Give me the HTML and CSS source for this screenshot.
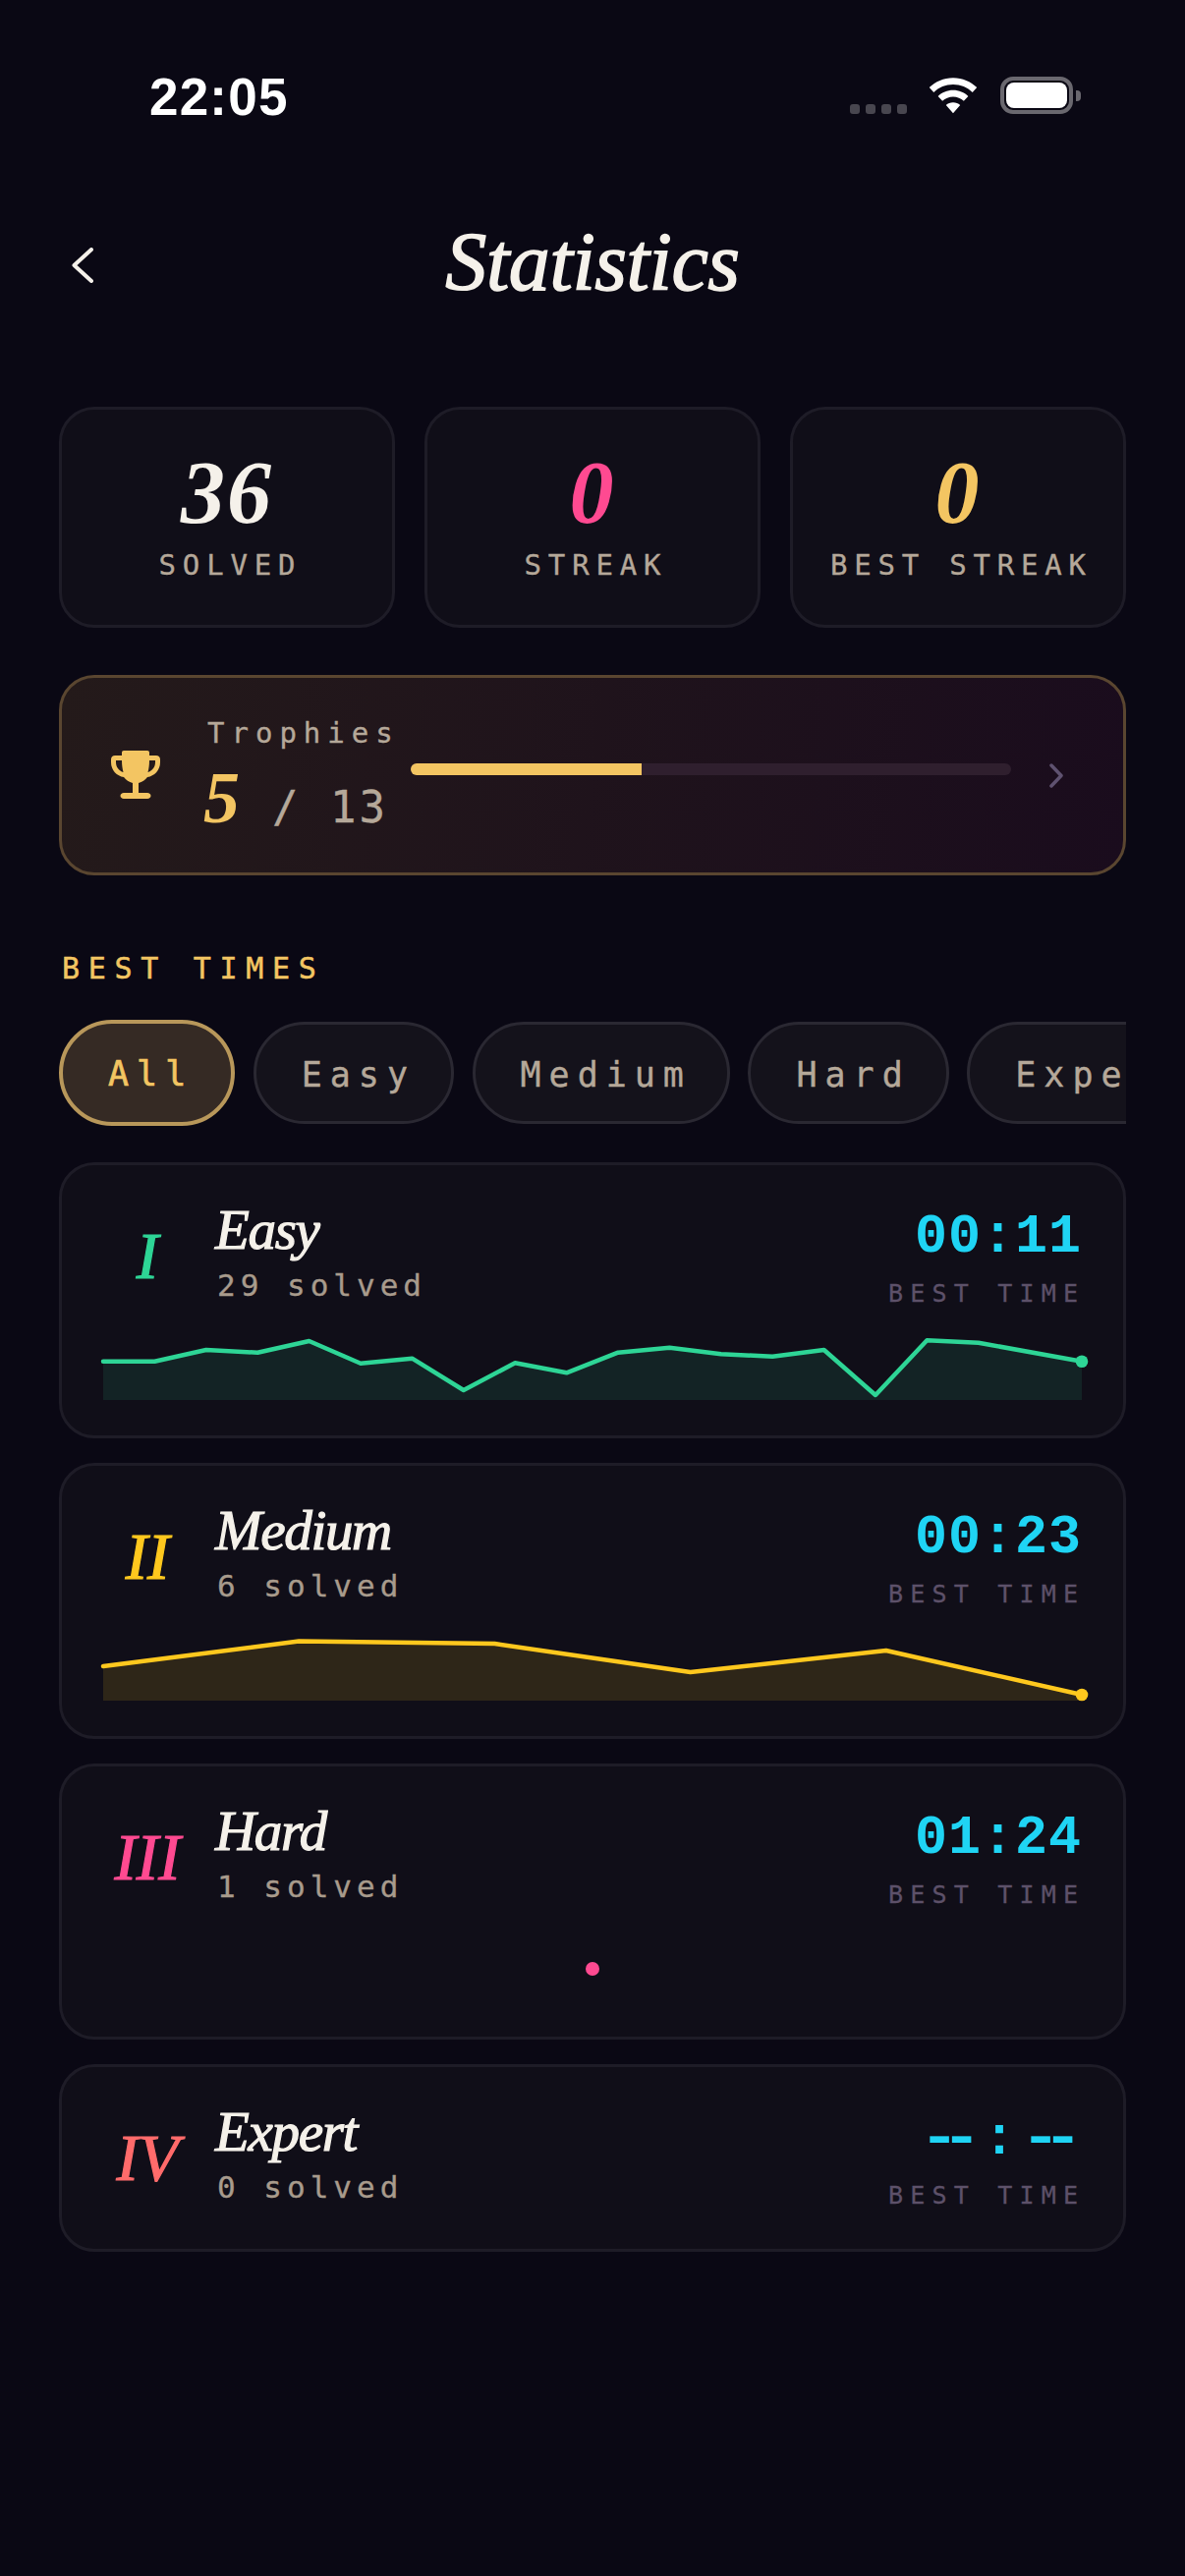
FILE: index.html
```html
<!DOCTYPE html>
<html lang="en">
<head>
<meta charset="utf-8">
<title>Statistics</title>
<link rel="stylesheet" href="styles.css">
</head>
<body>
<div class="screen">
  <div class="status">
    <span class="clock">22:05</span>
    <div class="status-icons">
      <div class="signal"><i></i><i></i><i></i><i></i></div>
      <svg class="wifi" width="50" height="37" viewBox="0 0 52 38"><path fill="#fff" d="M26 0C16 0 7.300 3.900.8 10.200l4.700 5.100C10.900 10.100 18 7 26 7s15.100 3.100 20.500 8.300l4.700-5.100C44.700 3.900 36 0 26 0zM26 13c-6.200 0-11.800 2.400-16 6.400l4.700 5.100c3-2.800 7-4.500 11.300-4.500s8.300 1.700 11.300 4.500l4.700-5.100C37.800 15.400 32.200 13 26 13zM26 26c-2.900 0-5.500 1.100-7.500 2.900L26 37.500l7.500-8.600C31.500 27.100 28.900 26 26 26z"/></svg>
      <div class="battery"><div class="battery-level"></div></div>
    </div>
  </div>

  <header class="nav">
    <svg class="back" width="22" height="36" viewBox="0 0 22 36"><path d="M20 2 2.500 18 20 34" fill="none" stroke="#f5f1ea" stroke-width="4" stroke-linecap="round" stroke-linejoin="round"/></svg>
    <h1 class="title">Statistics</h1>
  </header>

  <section class="stats">
    <div class="stat"><div class="stat-num">36</div><div class="stat-label">SOLVED</div></div>
    <div class="stat"><div class="stat-num pink">0</div><div class="stat-label">STREAK</div></div>
    <div class="stat"><div class="stat-num gold">0</div><div class="stat-label">BEST STREAK</div></div>
  </section>

  <section class="trophies">
    <svg class="trophy" width="50" height="50" viewBox="0 0 50 50"><path fill="#f3c562" d="M13 0h24c1.200 0 2 .8 2 2v3h7c2.200 0 4 1.500 4 4v3c0 8-6 14-13 15-2.200 3-5.200 5-9 6v10h9c2 0 3.500 1.400 3.500 3s-1.500 3-3.500 3H13c-2 0-3.500-1.400-3.500-3s1.500-3 3.500-3h9v-10c-3.800-1-6.800-3-9-6C6 26 0 20 0 12V9c0-2.500 1.800-4 4-4h7V2c0-1.200.8-2 2-2zM5 10v2c0 4.800 3.200 8.700 7.500 10-1-3.600-1.500-7.700-1.500-12H5zm34 0c0 4.300-.5 8.400-1.500 12 4.300-1.300 7.500-5.200 7.500-10v-2h-6z"/></svg>
    <div class="trophy-body">
      <div class="trophy-label">Trophies</div>
      <div class="trophy-row">
        <div class="trophy-count"><span class="trophy-num">5</span><span class="trophy-total">/ 13</span></div>
        <div class="track"><div class="fill"></div></div>
      </div>
    </div>
    <svg class="chev" width="14" height="25" viewBox="0 0 14 25"><path d="M2 2l10 10.500L2 23" fill="none" stroke="#5f5270" stroke-width="3.500" stroke-linecap="round" stroke-linejoin="round"/></svg>
  </section>

  <h2 class="section-title">BEST TIMES</h2>

  <nav class="pills">
    <span class="pill active">All</span>
    <span class="pill">Easy</span>
    <span class="pill">Medium</span>
    <span class="pill">Hard</span>
    <span class="pill">Expert</span>
  </nav>

  <section class="cards">
    <article class="card">
      <div class="card-top">
        <div class="numeral green">I</div>
        <div class="card-info"><div class="card-name">Easy</div><div class="card-solved">29 solved</div></div>
        <div class="card-time"><div class="time">00:11</div><div class="time-label">BEST TIME</div></div>
      </div>
      <svg class="spark" width="996" height="70" viewBox="0 0 996 70">
        <path fill="#2ed596" fill-opacity=".11" d="M0 30.700 52.400 30.700 104.800 19 157.200 21.700 209.600 10 262 32.700 314.400 27.700 366.800 60 419.200 32.300 471.600 42.300 524 21.700 576.400 16.700 628.800 23.300 681.200 25.700 733.600 19 786 65 838.400 9.300 890.800 11.700 996 30.700V70H0z"/>
        <path fill="none" stroke="#2ed596" stroke-width="4.500" stroke-linecap="round" stroke-linejoin="round" d="M0 30.700 52.400 30.700 104.800 19 157.200 21.700 209.600 10 262 32.700 314.400 27.700 366.800 60 419.200 32.300 471.600 42.300 524 21.700 576.400 16.700 628.800 23.300 681.200 25.700 733.600 19 786 65 838.400 9.300 890.800 11.700 996 30.700"/>
        <circle cx="996" cy="30.700" r="6.300" fill="#2ed596"/>
      </svg>
    </article>

    <article class="card">
      <div class="card-top">
        <div class="numeral yellow">II</div>
        <div class="card-info"><div class="card-name">Medium</div><div class="card-solved">6 solved</div></div>
        <div class="card-time"><div class="time">00:23</div><div class="time-label">BEST TIME</div></div>
      </div>
      <svg class="spark" width="996" height="70" viewBox="0 0 996 70">
        <path fill="#ffc81e" fill-opacity=".13" d="M0 35 199.200 9.600 398.400 12 597.600 41 796.800 19 996 64V70H0z"/>
        <path fill="none" stroke="#ffc81e" stroke-width="4.500" stroke-linecap="round" stroke-linejoin="round" d="M0 35 199.200 9.600 398.400 12 597.600 41 796.800 19 996 64"/>
        <circle cx="996" cy="64" r="6.300" fill="#ffc81e"/>
      </svg>
    </article>

    <article class="card">
      <div class="card-top">
        <div class="numeral pink">III</div>
        <div class="card-info"><div class="card-name">Hard</div><div class="card-solved">1 solved</div></div>
        <div class="card-time"><div class="time">01:24</div><div class="time-label">BEST TIME</div></div>
      </div>
      <svg class="spark" width="996" height="70" viewBox="0 0 996 70">
        <circle cx="498" cy="37" r="7" fill="#ff4a91"/>
      </svg>
    </article>

    <article class="card short">
      <div class="card-top">
        <div class="numeral coral">IV</div>
        <div class="card-info"><div class="card-name">Expert</div><div class="card-solved">0 solved</div></div>
        <div class="card-time"><div class="time"><span class="dash">--</span>:<span class="dash">--</span></div><div class="time-label">BEST TIME</div></div>
      </div>
    </article>
  </section>
</div>
</body>
</html>
```

FILE: styles.css
```css
* { box-sizing: border-box; margin: 0; padding: 0; }
html, body { background: #0a0814; }
body { width: 1206px; height: 2622px; overflow: hidden; }
.screen { width: 1206px; height: 2622px; display: flex; flex-direction: column; padding: 0 60px; }

.status { height: 100px; margin: 0 -60px; padding: 72px 114px 0 152px; display: flex; justify-content: space-between; align-items: flex-start; }
.clock { font: 700 53px/53px "Liberation Sans", sans-serif; color: #fff; letter-spacing: 1.200px; }
.status-icons { display: flex; align-items: flex-end; height: 38px; margin-top: 6px; }
.signal { display: flex; gap: 6px; margin-right: 22px; }
.signal i { width: 10px; height: 10px; border-radius: 3px; background: #48464f; display: block; }
.wifi { margin-right: 23px; display: block; }
.battery { position: relative; width: 74px; height: 38px; border: 4px solid #6a686f; border-radius: 13px; padding: 2px; }
.battery::after { content: ""; position: absolute; right: -12px; top: 10px; width: 5px; height: 11px; background: #6a686f; border-radius: 0 4px 4px 0; }
.battery-level { width: 100%; height: 100%; background: #fff; border-radius: 8px; }

.nav { height: 100px; margin-top: 117px; display: grid; grid-template-columns: 1fr auto 1fr; align-items: center; }
.back { margin: 6px 0 0 13px; }
.title { font: italic 400 84px/100px "Liberation Serif", serif; color: #f5f1ea; -webkit-text-stroke: 1.500px #f5f1ea; letter-spacing: -.400px; }

.stats { display: grid; grid-template-columns: repeat(3, 1fr); gap: 30px; margin-top: 97px; }
.stat { height: 225px; background: #100e18; border: 3px solid #1e1c27; border-radius: 36px; display: flex; flex-direction: column; align-items: center; padding-top: 35px; }
.stat-num { font: italic 700 90px/100px "Liberation Serif", serif; color: #f5f1ea; letter-spacing: 2px; }
.stat-label { font: 400 29px/40px "DejaVu Sans Mono", monospace; -webkit-text-stroke: .35px currentColor; color: #b5a899; letter-spacing: 6.800px; margin-top: 3px; margin-right: -6.800px; white-space: nowrap; }
.stat-num.pink, .numeral.pink { color: #ff4a91; }
.stat-num.gold { color: #f3c562; }

.trophies { height: 204px; margin-top: 48px; border: 3px solid #5a4630; border-radius: 36px; background: linear-gradient(100deg, #241a1a, #1a0c1d); display: flex; align-items: center; padding: 0 61px 0 50px; }
.trophy { flex: none; }
.trophy-body { flex: 1; margin-left: 47px; }
.trophy-label { font: 400 29px/36px "DejaVu Sans Mono", monospace; -webkit-text-stroke: .35px currentColor; color: #b5a899; letter-spacing: 7px; margin-left: 1px; }
.trophy-row { display: flex; align-items: flex-start; margin-top: 10px; }
.trophy-count { display: flex; align-items: baseline; width: 208px; flex: none; margin-left: -3px; margin-right: 3px; }
.trophy-num { font: italic 700 74px/76px "Liberation Serif", serif; color: #f3c562; }
.trophy-total { font: 400 44px/1 "DejaVu Sans Mono", monospace; -webkit-text-stroke: .35px currentColor; color: #b5a899; margin-left: 33px; letter-spacing: 3px; white-space: pre; }
.track { flex: 1; height: 12px; border-radius: 6px; background: #2f1f2e; margin-top: 3px; overflow: hidden; }
.fill { width: 38.500%; height: 100%; background: #f3c562; }
.chev { flex: none; margin-left: 39px; }

.section-title { font: 400 30px/40px "DejaVu Sans Mono", monospace; -webkit-text-stroke: .5px currentColor; color: #f3c562; letter-spacing: 8.700px; margin: 75px 0 0 3px; }

.pills { display: flex; align-items: center; gap: 18.500px; height: 108px; margin-top: 32px; overflow: hidden; }
.pill { flex: none; height: 104px; padding: 0 36px 0 46px; border-radius: 52px; border: 3px solid #2a2832; background: #14121b; font: 400 35px/102px "DejaVu Sans Mono", monospace; -webkit-text-stroke: .4px currentColor; color: #b5a899; letter-spacing: 8px; }
.pill.active { height: 108px; border: 4.500px solid #b8975a; background: #352a24; color: #f3c562; -webkit-text-stroke: .7px currentColor; padding: 0 38px 0 46px; border-radius: 54px; line-height: 103px; }

.cards { display: flex; flex-direction: column; gap: 25px; margin-top: 37px; }
.card { background: #100e18; border: 3px solid #1e1c27; border-radius: 36px; padding: 0 42px 36px; height: 281px; }
.card.short { height: 191px; padding-bottom: 0; }
.card-top { display: flex; height: 169px; padding-top: 34px; }
.numeral { width: 90px; margin-top: 18px; font: italic 400 67px/80px "Liberation Serif", serif; -webkit-text-stroke: 1.200px currentColor; text-align: center; flex: none; }
.green { color: #2ed596; }
.yellow { color: #ffc81e; }
.coral { color: #ff6b6b; }
.card-info { margin-left: 24px; flex: 1; }
.card-name { font: italic 400 57px/64px "Liberation Serif", serif; color: #f5f1ea; -webkit-text-stroke: 1.200px #f5f1ea; letter-spacing: -1.300px; }
.card-solved { font: 400 31px/40px "DejaVu Sans Mono", monospace; -webkit-text-stroke: .35px currentColor; color: #a89b8c; letter-spacing: 5px; margin-top: 4px; margin-left: 2px; }
.card-time { text-align: right; margin-top: 10px; }
.time { font: 700 55px/60px "Liberation Mono", monospace; color: #1fd4f4; letter-spacing: 1px; }
.dash { display: inline-block; letter-spacing: -15px; transform: scaleX(1.25); }
.dash:first-child { margin-right: 24px; }
.dash:last-child { margin: 0 22px 0 8.600px; }
.time-label { font: 400 25px/36px "DejaVu Sans Mono", monospace; -webkit-text-stroke: .3px currentColor; color: #5d5169; letter-spacing: 7.200px; margin-top: 9px; margin-right: -3.200px; }
.spark { display: block; overflow: visible; }
```
